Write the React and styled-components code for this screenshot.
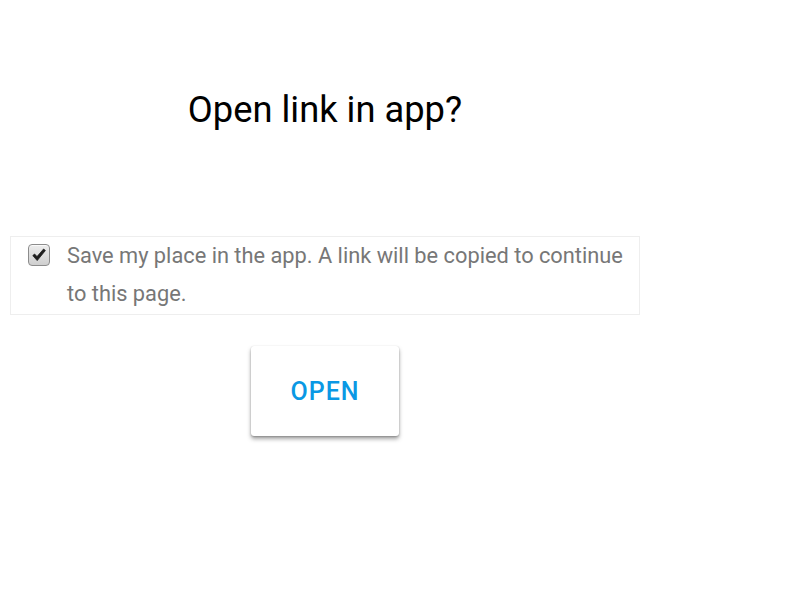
import React from "react";
import styled, { createGlobalStyle } from "styled-components";

const Global = createGlobalStyle`
  html, body { margin: 0; padding: 0; background: #fff; }
  body { font-family: Roboto, "Noto Sans", sans-serif; }
`;

const Page = styled.div`
  width: 630px;
  margin-left: 10px;
  padding: 88px 0 60px;
  display: flex;
  flex-direction: column;
  align-items: center;
`;

const Title = styled.h1`
  margin: 0;
  font-size: 36.3px;
  font-weight: 400;
  line-height: 44px;
  color: #000;
`;

const OptionBox = styled.label`
  margin-top: 104px;
  align-self: stretch;
  border: 1px solid #eeeeee;
  display: flex;
  align-items: flex-start;
  gap: 17px;
  padding: 0 10px 1px 17px;
`;

const Box = styled.span`
  flex: none;
  width: 22px;
  height: 22px;
  margin-top: 7px;
  box-sizing: border-box;
  border: 1px solid #8c8c8c;
  border-radius: 4px;
  background: linear-gradient(#ededed, #cfcfcf);
  box-shadow: inset 0 1px 0 #fafafa;
  display: flex;
  align-items: center;
  justify-content: center;
`;

const Label = styled.span`
  font-size: 21.8px;
  line-height: 38px;
  color: #777;
`;

const Button = styled.button`
  margin-top: 31px;
  width: 148px;
  height: 90px;
  padding: 0;
  border: none;
  border-radius: 3px;
  background: #fff;
  box-shadow: 0 3px 4px rgba(0, 0, 0, 0.35), 0 1px 2px rgba(0, 0, 0, 0.2), 0 0 1px rgba(0, 0, 0, 0.1);
  font-family: Roboto, sans-serif;
  font-weight: 500;
  font-size: 25px;
  letter-spacing: 1px;
  color: #0a98e4;
  cursor: pointer;
`;

export default function App() {
  return (
    <>
      <Global />
      <Page>
        <Title>Open link in app?</Title>
        <OptionBox>
          <Box>
            <svg width="16" height="16" viewBox="0 0 16 16">
              <path d="M1.8 8.6 L3.6 7 L6 9.6 L12.6 2 L14.4 3.5 L6.2 13.6 Z" fill="#1e1e1e" stroke="#1e1e1e" strokeWidth="0.8" strokeLinejoin="round" />
            </svg>
          </Box>
          <Label>Save my place in the app. A link will be copied to continue to this page.</Label>
        </OptionBox>
        <Button>OPEN</Button>
      </Page>
    </>
  );
}
